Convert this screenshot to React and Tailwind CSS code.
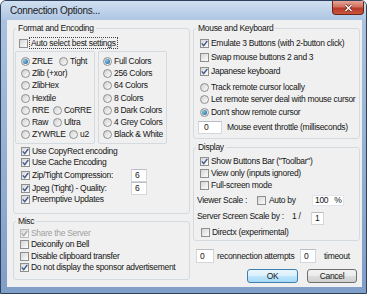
import React from "react";

function Box({ checked, disabled }) {
  return (
    <span
      className={`inline-flex items-center justify-center w-[9px] h-[9px] shrink-0 border ${
        disabled ? "border-[#bcbcbc]" : "border-[#8e8f8f]"
      } bg-linear-to-br from-[#d6d6d6] to-[#fcfcfc]`}
    >
      {checked && (
        <svg width="7" height="7" viewBox="0 0 7 7">
          <path
            d="M0.8 3.4 L2.7 5.6 L6.3 0.8"
            fill="none"
            stroke={disabled ? "#a9a9a9" : "#3d578a"}
            strokeWidth="1.4"
          />
        </svg>
      )}
    </span>
  );
}

function Dot({ on }) {
  return (
    <span className="inline-flex items-center justify-center w-[9px] h-[9px] shrink-0 rounded-full border border-[#8e8f8f] bg-linear-to-br from-[#d2d2d2] to-[#fbfbfb]">
      {on && (
        <span className="w-[5px] h-[5px] rounded-full bg-[radial-gradient(circle_at_35%_35%,#7fc6ea,#1a5a8c)]" />
      )}
    </span>
  );
}

function Chk({ label, checked, disabled, className = "" }) {
  return (
    <div className={`flex items-center gap-[2px] ${className}`}>
      <Box checked={checked} disabled={disabled} />
      <span className={disabled ? "text-[#a0a0a0]" : ""}>{label}</span>
    </div>
  );
}

function Rad({ label, on, className = "" }) {
  return (
    <div className={`flex items-center gap-[2px] ${className}`}>
      <Dot on={on} />
      <span>{label}</span>
    </div>
  );
}

function Field({ value, className = "" }) {
  return (
    <div
      className={`flex items-center bg-white border border-[#d3d7dc] border-t-[#b9bec5] pl-[3px] ${className}`}
    >
      {value}
    </div>
  );
}

function Group({ title, className = "", children }) {
  return (
    <fieldset className={`border border-[#d3dbe0] rounded-[3px] min-w-0 ${className}`}>
      <legend className="ml-[2px] px-[2px] leading-[12px]">{title}</legend>
      {children}
    </fieldset>
  );
}

function Btn({ label, def }) {
  return (
    <div
      className={`flex items-center justify-center h-[14px] rounded-[3px] border ${
        def
          ? "w-[51px] border-[#3c7fb1] bg-[linear-gradient(#eaf6fd_0%,#d9f0fc_50%,#bee6fd_50%,#a7d9f5_100%)]"
          : "w-[50px] border-[#707070] bg-[linear-gradient(#f2f2f2_0%,#ebebeb_50%,#dddddd_50%,#cfcfcf_100%)]"
      }`}
    >
      {label}
    </div>
  );
}

export default function App() {
  return (
    <div className="w-[367px] h-[294px] flex flex-col overflow-hidden rounded-t-[6px] border border-[#2f415a] bg-linear-to-b from-[#adc4e1] to-[#7f9ec8] text-[#161616] text-[8.5px] leading-[11px] tracking-[-0.3px] [font-family:'Liberation_Sans',Arial,sans-serif]">
      {/* title bar */}
      <div className="h-[19px] flex items-start shrink-0 bg-linear-to-b from-[#d0dff0] to-[#aec6e3]">
        <span className="ml-[9px] mt-[4px] text-[10px] leading-[12px] tracking-[-0.3px] text-[#1a1a1a]">
          Connection Options...
        </span>
        <div className="ml-auto mr-[2px] w-[32px] h-[14px] flex items-center justify-center rounded-b-[4px] border border-t-0 border-[#6e2419] bg-[linear-gradient(#e8a595_0%,#d0705f_45%,#b83a27_55%,#c9553f_100%)]">
          <svg width="9" height="8" viewBox="0 0 9 8">
            <path d="M1.5 1 L7.5 7 M7.5 1 L1.5 7" stroke="#5a1a10" strokeWidth="2.6" />
            <path d="M1.5 1 L7.5 7 M7.5 1 L1.5 7" stroke="#ffffff" strokeWidth="1.5" />
          </svg>
        </div>
      </div>

      {/* client */}
      <div className="ml-[6px] w-[355px] h-[267px] shrink-0 bg-[#f0f0f0] flex pl-[6px] pt-[2px] gap-[3px]">
        {/* left column */}
        <div className="w-[177px] flex flex-col">
          <Group title="Format and Encoding" className="h-[192px]">
            <div className="mt-[3px] h-[12px] ml-[5px] flex items-center gap-[1px]">
              <Box />
              <span className="border border-dotted border-[#444] px-[1px] leading-[10px]">
                Auto select best settings
              </span>
            </div>
            <div className="mt-[2px] ml-[1px] flex gap-[3px]">
              <div className="w-[80px] h-[93px] border border-[#d3dbe0] rounded-[2px] pt-[3px] pl-[5px]">
                <div className="h-[12.3px] flex items-center">
                  <Rad label="ZRLE" on className="w-[38px]" />
                  <Rad label="Tight" />
                </div>
                <Rad label="Zlib (+xor)" className="h-[12.3px]" />
                <Rad label="ZlibHex" className="h-[12.3px]" />
                <Rad label="Hextile" className="h-[12.3px]" />
                <div className="h-[12.3px] flex items-center">
                  <Rad label="RRE" className="w-[32px]" />
                  <Rad label="CoRRE" />
                </div>
                <div className="h-[12.3px] flex items-center">
                  <Rad label="Raw" className="w-[32px]" />
                  <Rad label="Ultra" />
                </div>
                <div className="h-[12.3px] flex items-center">
                  <Rad label="ZYWRLE" className="w-[48px]" />
                  <Rad label="u2" />
                </div>
              </div>
              <div className="w-[69px] h-[93px] border border-[#d3dbe0] rounded-[2px] pt-[3px] pl-[4px]">
                <Rad label="Full Colors" on className="h-[12.3px]" />
                <Rad label="256 Colors" className="h-[12.3px]" />
                <Rad label="64 Colors" className="h-[12.3px]" />
                <Rad label="8 Colors" className="h-[12.3px]" />
                <Rad label="8 Dark Colors" className="h-[12.3px]" />
                <Rad label="4 Grey Colors" className="h-[12.3px]" />
                <Rad label="Black & White" className="h-[12.3px]" />
              </div>
            </div>
            <div className="mt-[2px] ml-[7px] flex flex-col">
              <Chk label="Use CopyRect encoding" checked className="h-[11px]" />
              <Chk label="Use Cache Encoding" checked className="h-[11px]" />
              <div className="h-[14px] flex items-center gap-[2px]">
                <Box checked />
                <span className="w-[97px]">Zip/Tight Compression:</span>
                <Field value="6" className="w-[16px] h-[13px]" />
              </div>
              <div className="h-[12px] flex items-center gap-[2px]">
                <Box checked />
                <span className="w-[97px]">Jpeg (Tight) - Quality:</span>
                <Field value="6" className="w-[16px] h-[13px] shrink-0" />
              </div>
              <Chk label="Preemptive Updates" checked className="h-[11px]" />
            </div>
          </Group>
          <Group title="Misc" className="mt-[1px] h-[65px]">
            <div className="pt-[0.5px] ml-[6px] flex flex-col">
              <Chk label="Share the Server" checked disabled className="h-[11.5px]" />
              <Chk label="Deiconify on Bell" className="h-[11.5px]" />
              <Chk label="Disable clipboard transfer" className="h-[11.5px]" />
              <Chk label="Do not display the sponsor advertisement" checked className="h-[11.5px]" />
            </div>
          </Group>
        </div>

        {/* right column */}
        <div className="w-[167px] flex flex-col">
          <Group title="Mouse and Keyboard" className="h-[117px]">
            <div className="pt-[2px] flex flex-col">
              <Chk label="Emulate 3 Buttons (with 2-button click)" checked className="h-[14px] ml-[6px]" />
              <Chk label="Swap mouse buttons 2 and 3" className="h-[14px] ml-[6px]" />
              <Chk label="Japanese keyboard" checked className="h-[14px] ml-[6px]" />
              <div className="mt-[2.75px]">
                <Rad label="Track remote cursor locally" className="h-[12.5px] ml-[6px]" />
                <Rad label="Let remote server deal with mouse cursor" className="h-[12.5px] ml-[6px]" />
                <Rad label="Don't show remote cursor" on className="h-[12.5px] ml-[6px]" />
              </div>
              <div className="mt-[2.75px] h-[13px] ml-[4px] flex items-center gap-[5px]">
                <Field value="0" className="w-[24px] h-[13px] pl-[5px]" />
                <span>Mouse event throttle (milliseconds)</span>
              </div>
            </div>
          </Group>
          <Group title="Display" className="mt-[2px] h-[100px]">
            <div className="mt-[2px] flex flex-col">
              <Chk label={'Show Buttons Bar ("Toolbar")'} checked className="h-[12px] ml-[6px]" />
              <Chk label="View only (inputs ignored)" className="h-[12px] ml-[6px]" />
              <Chk label="Full-screen mode" className="h-[12px] ml-[6px]" />
              <div className="mt-[3px] h-[12px] ml-[3px] flex items-center">
                <span className="w-[60px]">Viewer Scale :</span>
                <Box />
                <span className="ml-[3px] w-[43px]">Auto by</span>
                <div className="w-[32px] h-[11px] bg-white border border-[#e2e5e9] flex items-center pl-[2px] gap-[6px]">
                  <span>100</span>
                  <span>%</span>
                </div>
              </div>
              <div className="mt-[4px] h-[15px] ml-[3px] flex items-start">
                <span className="w-[95px] leading-[12px]">Server Screen Scale by :</span>
                <span className="w-[19px] leading-[12px]">1 /</span>
                <Field value="1" className="mt-[2px] w-[13px] h-[13px]" />
              </div>
              <Chk label="Directx (experimental)" className="mt-[2px] h-[11px] ml-[7px]" />
            </div>
          </Group>
          <div className="mt-[8px] h-[14px] ml-[3px] flex items-center">
            <Field value="0" className="w-[18px] h-[14px]" />
            <span className="ml-[3px] w-[83px]">reconnection attempts</span>
            <Field value="0" className="w-[16px] h-[14px]" />
            <span className="ml-[8px]">timeout</span>
          </div>
          <div className="mt-[6px] flex justify-end gap-[9px] pr-[3px]">
            <Btn label="OK" def />
            <Btn label="Cancel" />
          </div>
        </div>
      </div>
    </div>
  );
}
